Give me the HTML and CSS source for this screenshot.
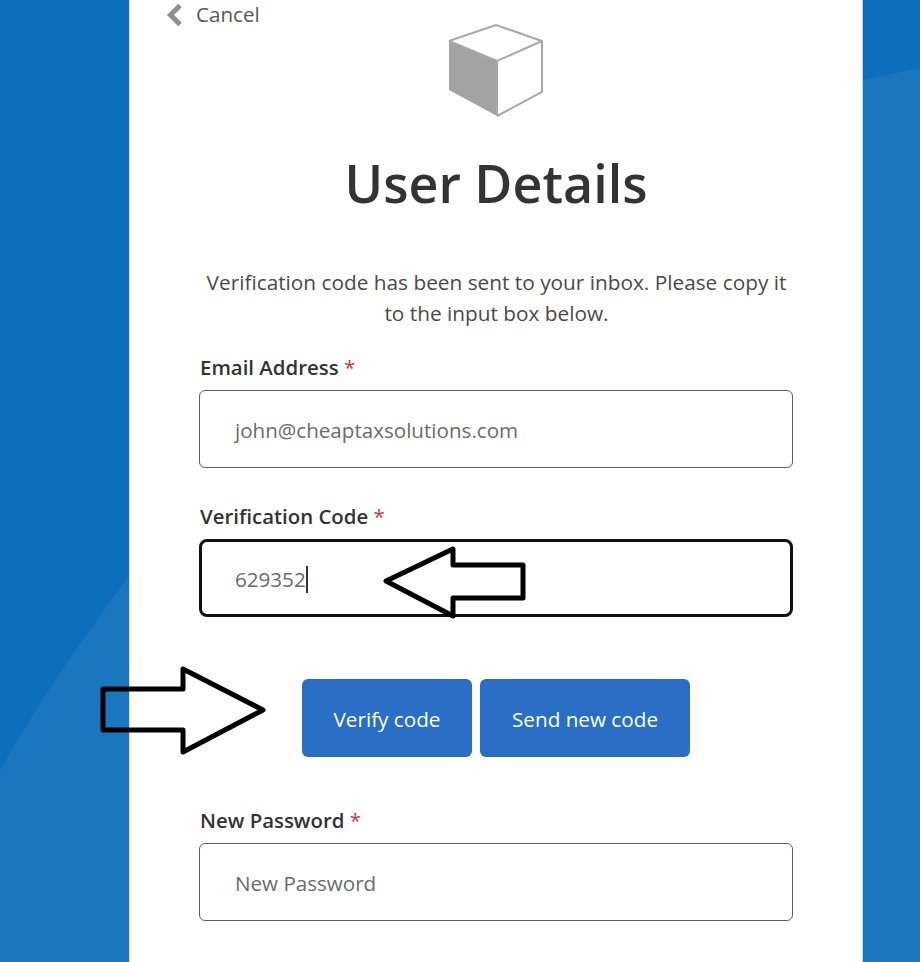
FILE: index.html
```html
<!DOCTYPE html>
<html lang="en">
<head>
<meta charset="utf-8">
<title>User Details</title>
<link rel="stylesheet" href="styles.css">
</head>
<body>
<svg class="backdrop" viewBox="0 0 920 962" aria-hidden="true"><path class="backdrop-shape" d="M0 770C40 700 85 635 130 575C330 295 600 130 920 68V962H0Z"/></svg>
<main class="card">
  <a class="cancel" href="#">
    <svg class="chevron" viewBox="0 0 18 24" aria-hidden="true"><path d="M15 3.5 5.5 13 15 22.5" /></svg>
    <span>Cancel</span>
  </a>
  <div class="logo">
    <svg viewBox="0 0 96 94" width="96" height="94" aria-hidden="true">
      <path class="cube-dark" d="M1 17 49 37V92L1 66Z"/>
      <path class="cube-line" d="M1 17 48 1 94 17V68L49 92M1 17 49 37 94 17M49 37V92"/>
    </svg>
  </div>
  <h1 class="title">User Details</h1>
  <p class="intro">Verification code has been sent to your inbox. Please copy it to the input box below.</p>
  <form class="form">
    <div class="field">
      <label class="label">Email Address <span class="req">*</span></label>
      <div class="input muted">john@cheaptaxsolutions.com</div>
    </div>
    <div class="field">
      <label class="label">Verification Code <span class="req">*</span></label>
      <div class="input focused"><span>629352</span><i class="caret"></i></div>
    </div>
    <div class="actions">
      <button type="button" class="btn verify">Verify code</button>
      <button type="button" class="btn send">Send new code</button>
    </div>
    <div class="field">
      <label class="label">New Password <span class="req">*</span></label>
      <div class="input">New Password</div>
    </div>
    <div class="field">
      <label class="label">Confirm New Password <span class="req">*</span></label>
    </div>
  </form>
</main>
<svg class="arrow arrow-left" viewBox="0 0 144 74" aria-hidden="true"><path d="M2 35 69 3V19H139V52H69V70Z"/></svg>
<svg class="arrow arrow-right" viewBox="0 0 166 88" aria-hidden="true"><path d="M162 43 82 2V22H2V63H82V85Z"/></svg>
</body>
</html>
```
FILE: styles.css
```css
* { box-sizing: border-box; }
html, body { margin: 0; height: 962px; overflow: hidden; }
body {
  position: relative;
  background: #0c6fbd;
  font-family: "Open Sans", "Noto Sans", "Liberation Sans", sans-serif;
  color: #333;
}
.backdrop { position: absolute; inset: 0; width: 920px; height: 962px; }
.backdrop-shape { fill: #1b76c0; }
.card {
  position: relative;
  width: 734px;
  height: 962px;
  margin-left: 129px;
  background: #fff;
  padding: 0 69px;
  border-left: 1px solid #d4e6f5;
  border-right: 1px solid #ccc;
}
.cancel {
  position: absolute;
  left: 35px;
  top: 0;
  display: flex;
  align-items: center;
  gap: 13px;
  height: 28px;
  color: #595959;
  font-size: 20.6px;
  text-decoration: none;
}
.chevron { width: 18px; height: 24px; fill: none; stroke: #8f8f8f; stroke-width: 5; }
.logo { display: flex; justify-content: center; padding-top: 24px; height: 118px; }
.cube-dark { fill: #a3a3a3; }
.cube-line { fill: none; stroke: #a9a9a9; stroke-width: 2; }
.title {
  margin: 27px 0 0;
  text-align: center;
  font-size: 52px;
  line-height: 76px;
  font-weight: 600;
  color: #333;
}
.intro {
  margin: 46px 0 0;
  padding-left: 1px;
  text-align: center;
  font-size: 20.8px;
  line-height: 31px;
  color: #4a4a4a;
}
.form { margin-top: 24px; }
.label { display: block; padding-left: 1px; font-size: 20.4px; line-height: 28px; font-weight: 600; color: #333; }
.req { color: #d13438; font-weight: 400; }
.field { margin-bottom: 34px; }
.input {
  display: flex;
  align-items: center;
  height: 78px;
  margin-top: 9px;
  padding: 2px 35px 0;
  border: 1px solid #605e5c;
  border-radius: 6px;
  background: #fff;
  font-size: 20.6px;
  color: #6b6b6b;
}
.focused { border: 3px solid #111; border-radius: 8px; padding: 2px 33px 0; }
.caret { width: 2px; height: 27px; background: #333; }
.actions { display: flex; justify-content: center; gap: 8px; padding-top: 28px; margin-bottom: 49px; }
.btn {
  height: 78px;
  padding-top: 3px;
  border: 0;
  border-radius: 6px;
  background: #2a6ec6;
  color: #fff;
  font: 400 20.7px "Open Sans", "Noto Sans", sans-serif;
}
.verify { width: 170px; }
.send { width: 210px; }
.arrow { position: absolute; fill: none; stroke: #000; stroke-width: 5; stroke-linejoin: round; overflow: visible; }
.arrow-left { left: 384px; top: 546px; width: 144px; height: 74px; }
.arrow-right { left: 101px; top: 667px; width: 166px; height: 88px; }
```
